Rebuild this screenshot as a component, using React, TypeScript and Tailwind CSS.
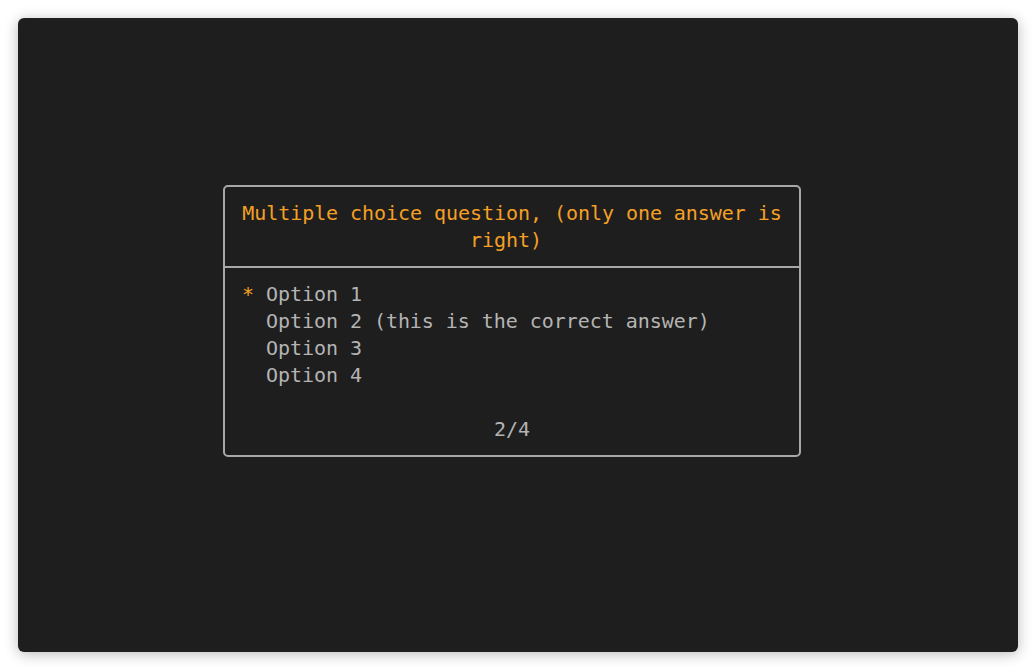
export default function App() {
  const mono = { fontFamily: '"DejaVu Sans Mono", "Liberation Mono", monospace' };
  return (
    <div className="w-[1036px] h-[670px] bg-white p-[18px]">
      <div className="w-[1000px] h-[634px] bg-[#1e1e1e] rounded-[6px] shadow-[0_2px_14px_rgba(0,0,0,0.28)] pl-[205px] pt-[167px]">
        <div
          className="w-[578px] border-2 border-[#a8a8a8] rounded-[5px] text-[20px] leading-[27px] tracking-[-0.05px]"
          style={mono}
        >
          <div className="pt-[13px] pb-[12px] text-center text-[#f5a025]">
            <div>Multiple choice question, (only one answer is</div>
            <div className="pr-[12px]">right)</div>
          </div>
          <div className="border-t-2 border-[#a8a8a8]" />
          <div className="pl-[17px] pt-[13px] pb-[12px] text-[#b4b4b4]">
            <div className="whitespace-pre"><span className="text-[#f5a025]">*</span> Option 1</div>
            <div className="whitespace-pre">  Option 2 (this is the correct answer)</div>
            <div className="whitespace-pre">  Option 3</div>
            <div className="whitespace-pre">  Option 4</div>
            <div className="h-[27px]" />
            <div className="text-center pr-[17px]">2/4</div>
          </div>
        </div>
      </div>
    </div>
  );
}
